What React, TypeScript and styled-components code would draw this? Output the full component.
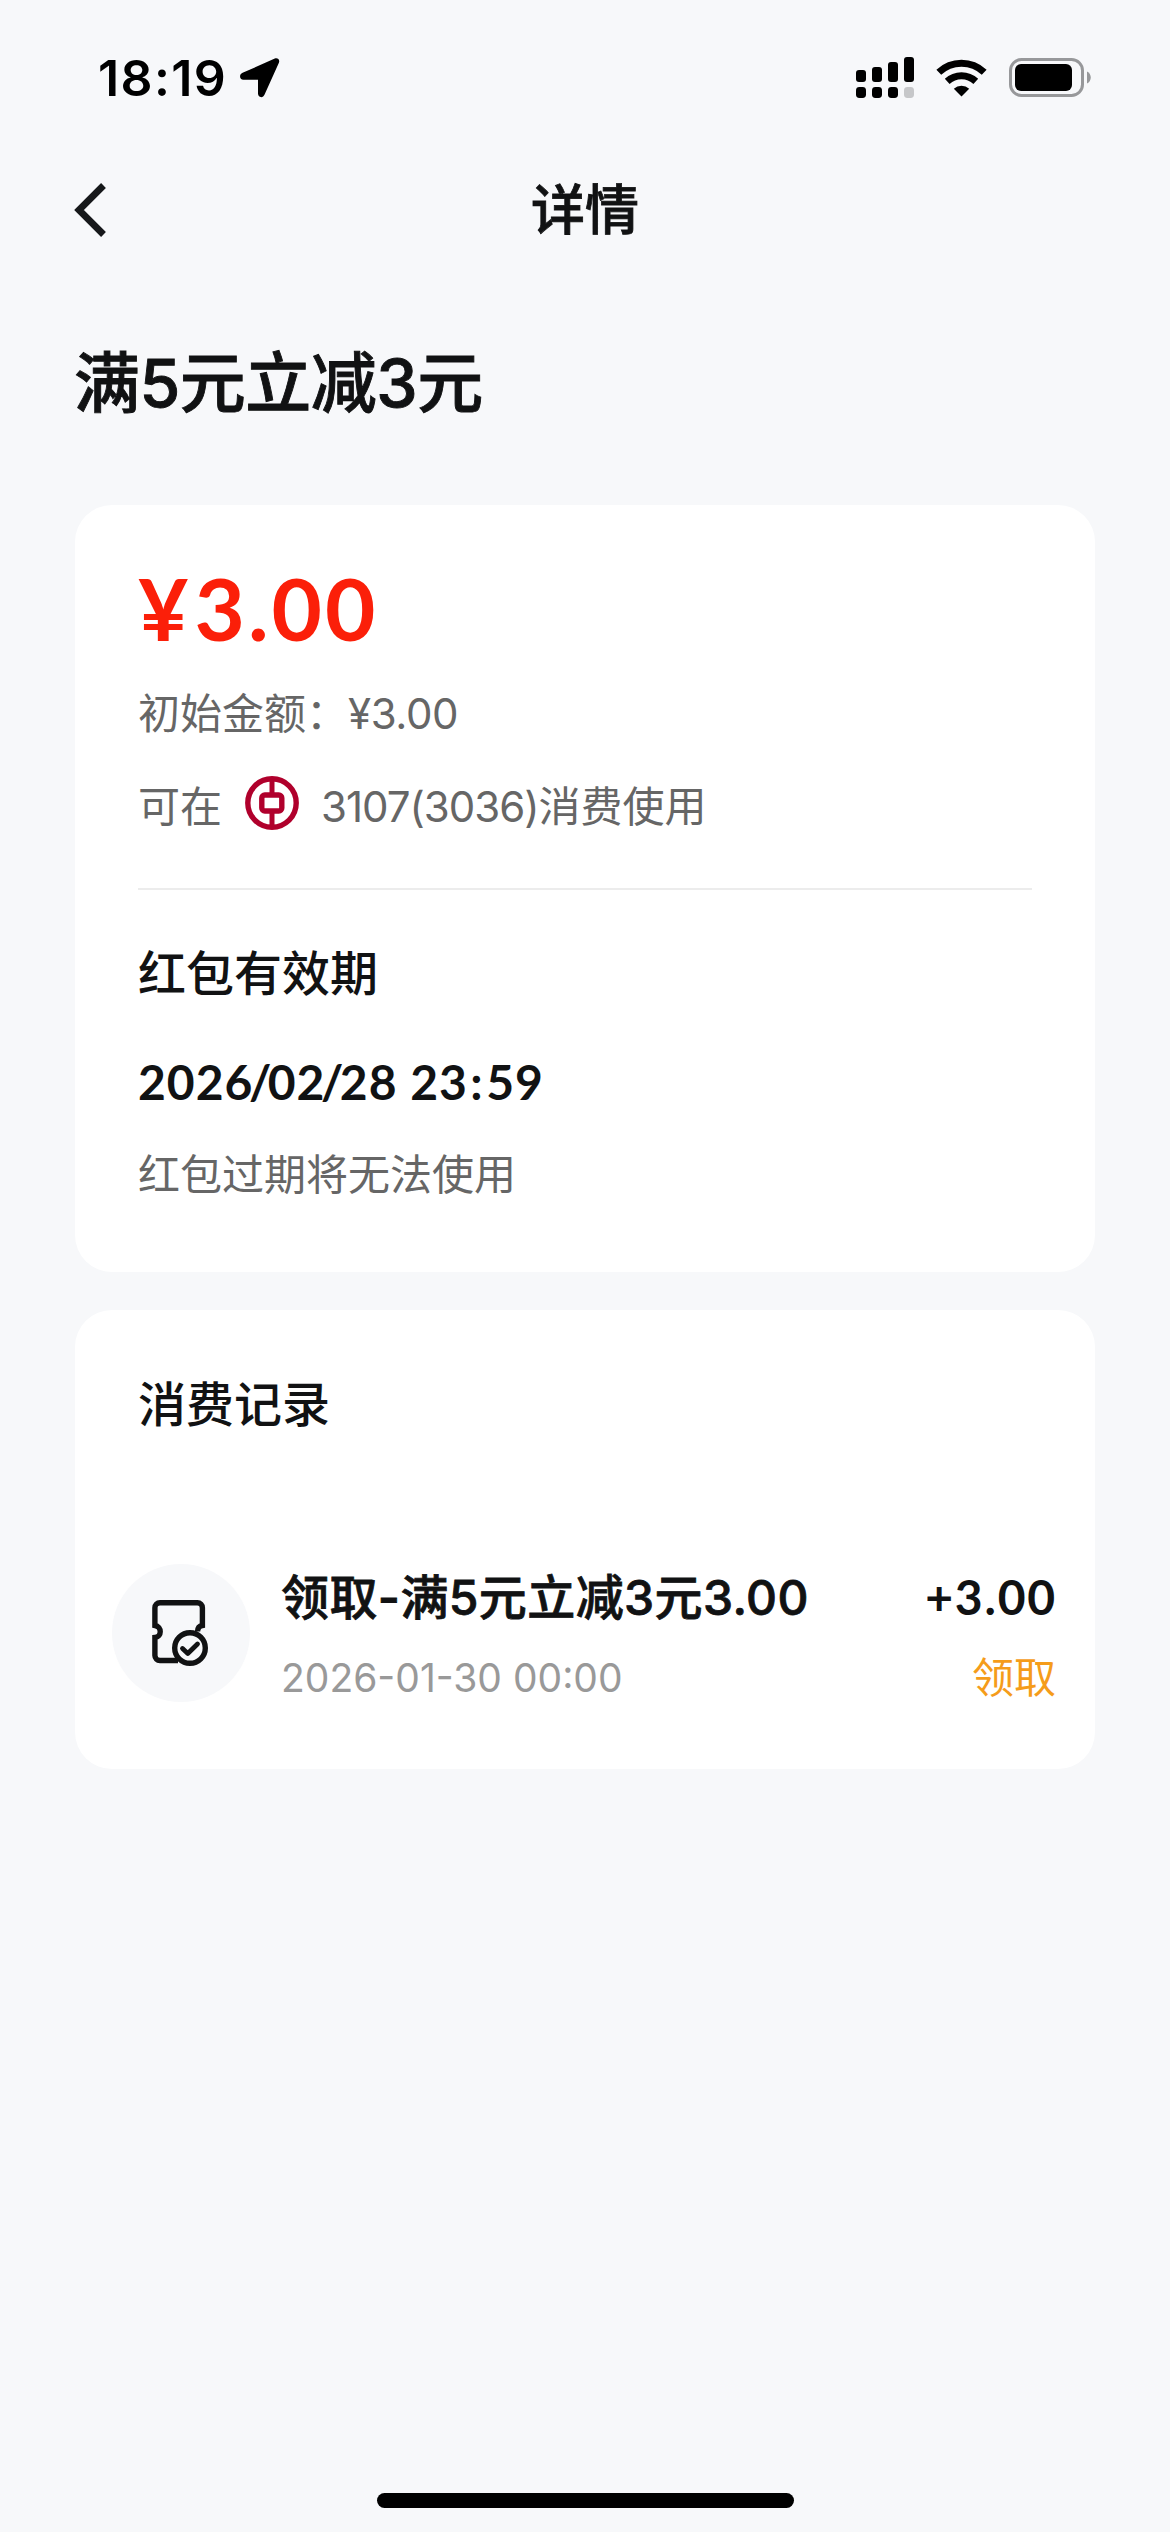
import React from "react";
import styled, { createGlobalStyle } from "styled-components";

const GlobalStyle = createGlobalStyle`
  * { box-sizing: border-box; }
  html, body { margin: 0; padding: 0; background: #f7f8fa; }
`;

const sans = `Inter, "Noto Sans CJK SC", sans-serif`;
const numeric = `Lato, "Noto Sans CJK SC", sans-serif`;

const Screen = styled.div`
  width: 1170px;
  height: 2532px;
  display: flex;
  flex-direction: column;
  background: #f7f8fa;
  color: #111213;
  font-family: ${sans};
  overflow: hidden;
`;

const StatusBar = styled.header`
  height: 156px;
  padding: 0 79px 0 98px;
  display: flex;
  justify-content: space-between;
  align-items: center;
  color: #000;
`;

const StatusGroup = styled.div<{ $gap: number }>`
  display: flex;
  align-items: center;
  gap: ${(p) => p.$gap}px;
`;

const Clock = styled.span`
  font-size: 50px;
  line-height: 60px;
  font-weight: 600;
  letter-spacing: 1.4px;
`;

const NavBar = styled.nav`
  height: 108px;
  padding: 0 74px;
  display: grid;
  grid-template-columns: 60px 1fr 60px;
  align-items: center;
`;

const BackButton = styled.button`
  border: 0;
  padding: 0;
  background: none;
  display: flex;
`;

const NavTitle = styled.h1`
  margin: 1px 0 0;
  text-align: center;
  font-size: 54px;
  line-height: 72px;
  font-weight: 500;
  -webkit-text-stroke: 0.8px currentColor;
`;

const Content = styled.main`
  flex: 1;
  padding: 0 75px;
  display: flex;
  flex-direction: column;
`;

const PageTitle = styled.h2`
  margin: 74px 0 77px -1px;
  font-size: 66px;
  line-height: 90px;
  font-weight: 500;
  letter-spacing: -0.5px;
  -webkit-text-stroke: 0.9px currentColor;
`;

const Card = styled.section<{ $height: number }>`
  height: ${(p) => p.$height}px;
  margin-bottom: 38px;
  border-radius: 37px;
  background: #fff;
  display: flex;
  flex-direction: column;
`;

const CardBody = styled.div`
  padding: 55px 63px 0;
  display: flex;
  flex-direction: column;
`;

const Amount = styled.div`
  font-family: ${numeric};
  font-size: 87px;
  line-height: 96px;
  font-weight: 700;
  letter-spacing: 3px;
  color: #fb1f09;
`;

const Currency = styled.span`
  margin-right: 3px;
`;

const Muted = styled.p<{ $top: number }>`
  margin: ${(p) => p.$top}px 0 0;
  height: 60px;
  display: flex;
  align-items: center;
  font-size: 42px;
  line-height: 60px;
  font-weight: 400;
  color: #666;
  white-space: pre;
`;

const Digits = styled.span<{ $spacing: number }>`
  letter-spacing: ${(p) => p.$spacing}px;
`;

const BankLogo = styled.svg`
  margin: 0 22px 8px 23px;
  flex: none;
`;

const Divider = styled.hr`
  width: 100%;
  height: 2px;
  margin: 51px 0 0;
  border: 0;
  background: #ececec;
`;

const SectionTitle = styled.h3<{ $top: number }>`
  margin: ${(p) => p.$top}px 0 0;
  font-size: 48px;
  line-height: 66px;
  font-weight: 500;
`;

const Expiry = styled.div`
  margin-top: 42px;
  font-family: ${numeric};
  font-size: 48px;
  line-height: 66px;
  font-weight: 700;
  letter-spacing: 1px;
`;

const Separator = styled.span<{ $space: number }>`
  margin: 0 ${(p) => p.$space}px;
`;

const RecordRow = styled.div`
  margin-top: 126px;
  padding: 0 39px 0 37px;
  display: flex;
`;

const RecordIcon = styled.div`
  width: 138px;
  height: 138px;
  margin-right: 31px;
  border-radius: 50%;
  background: #f7f8fa;
  display: flex;
  align-items: center;
  justify-content: center;
`;

const RecordText = styled.div<{ $end?: boolean }>`
  display: flex;
  flex-direction: column;
  gap: 17px;
  padding-top: 1px;
  align-items: ${(p) => (p.$end ? "flex-end" : "flex-start")};
  flex: ${(p) => (p.$end ? "none" : "1")};
`;

const RecordTitle = styled.div`
  font-size: 48px;
  line-height: 66px;
  font-weight: 500;
  letter-spacing: 0.4px;
  -webkit-text-stroke: 0.8px currentColor;
`;

const RecordAmount = styled.div`
  margin: -1px -1px 1px 0;
  font-family: ${numeric};
  font-size: 48px;
  line-height: 66px;
  font-weight: 700;
  letter-spacing: 1.8px;
`;

const RecordTime = styled.div`
  font-size: 39px;
  line-height: 60px;
  font-weight: 400;
  color: #999;
`;

const RecordStatus = styled.div`
  font-size: 42px;
  line-height: 60px;
  font-weight: 400;
  color: #f59c1a;
`;

const HomeIndicator = styled.div`
  width: 417px;
  height: 15px;
  margin: 0 auto 24px;
  border-radius: 8px;
  background: #000;
`;

const LocationArrow = () => (
  <svg width="40" height="40" viewBox="0 0 40 40" fill="#000">
    <path d="M34.8.6C37.7-.5 40.1 1.9 38.9 4.7L24.6 36.6C23.2 40.4 18 39.8 18 35.6V21.8H3.4C-.6 21.8-1.2 16.4 2.6 14.8Z" />
  </svg>
);

const Signal = () => (
  <svg width="58" height="42" viewBox="0 0 58 42">
    <rect x="0" y="13" width="10" height="12" rx="3" />
    <rect x="16" y="10" width="10" height="15" rx="3" />
    <rect x="32" y="5" width="10" height="20" rx="3" />
    <rect x="48" y="0" width="10" height="25" rx="3" />
    <rect x="0" y="30" width="10" height="11" rx="3.4" />
    <rect x="16" y="30" width="10" height="11" rx="3.4" />
    <rect x="32" y="30" width="10" height="11" rx="3.4" />
    <rect x="48" y="30" width="10" height="11" rx="3.4" fill="#c6c7c9" />
  </svg>
);

const Wifi = () => (
  <svg width="51" height="38" viewBox="0 0 51 38" fill="none" stroke="#000">
    <path d="M2.8 13.2a33 33 0 0 1 45.4 0" strokeWidth="7" />
    <path d="M11.2 22.4a21 21 0 0 1 28.6 0" strokeWidth="7" />
    <path d="M17.8 29.8a11.5 11.5 0 0 1 15.4 0L25.5 37.6Z" fill="#000" stroke="none" />
  </svg>
);

const Battery = () => (
  <svg width="82" height="40" viewBox="0 0 82 40">
    <rect x="1.5" y="1.5" width="72" height="36" rx="11" fill="none" stroke="#97989a" strokeWidth="3" />
    <rect x="6" y="6" width="57" height="27" rx="6" />
    <path d="M78 13.5c5 2.2 5 9.8 0 12Z" fill="#97989a" />
  </svg>
);

const BankOfChina = () => (
  <BankLogo width="54" height="54" viewBox="0 0 54 54" fill="none" stroke="#b0002c">
    <circle cx="27" cy="27" r="24.2" strokeWidth="5.4" />
    <path d="M27 2v15M27 37v15" strokeWidth="5" />
    <rect x="16.8" y="19" width="20" height="16" rx="3" strokeWidth="5.4" />
  </BankLogo>
);

const CouponCheck = () => (
  <svg width="60" height="68" viewBox="0 0 60 68" fill="none" stroke="#111213" strokeWidth="5.4">
    <path d="M27 61.500H8.900a5 5 0 0 1-5-5V38.500C11 38 11 27.500 3.900 26.500V8.700a5 5 0 0 1 5-5H46.400a5 5 0 0 1 5 5V26.500C48.500 27 46.600 29 46.600 32.500" />
    <circle cx="39" cy="49" r="15.3" fill="#f7f8fa" />
    <path d="M31.500 49.500l5.300 5L46.500 45" strokeLinecap="round" strokeLinejoin="round" strokeWidth="4.8" />
  </svg>
);

export default function App() {
  return (
    <Screen>
      <GlobalStyle />
      <StatusBar>
        <StatusGroup $gap={13}>
          <Clock>18:19</Clock>
          <LocationArrow />
        </StatusGroup>
        <StatusGroup $gap={22}>
          <Signal />
          <Wifi />
          <Battery />
        </StatusGroup>
      </StatusBar>
      <NavBar>
        <BackButton aria-label="返回">
          <svg width="33" height="54" viewBox="0 0 33 54" fill="none" stroke="#16181a" strokeWidth="6.8">
            <path d="M29.500 2.500L5 27L29.500 51.500" />
          </svg>
        </BackButton>
        <NavTitle>详情</NavTitle>
      </NavBar>
      <Content>
        <PageTitle>满5元立减3元</PageTitle>
        <Card $height={767}>
          <CardBody>
            <Amount>
              <Currency>¥</Currency>3.00
            </Amount>
            <Muted $top={28}>
              初始金额：<Digits $spacing={-0.4}>¥3.00</Digits>
            </Muted>
            <Muted $top={33}>
              可在
              <BankOfChina />
              <Digits $spacing={-1}>3107(3036)</Digits>消费使用
            </Muted>
            <Divider />
            <SectionTitle $top={51}>红包有效期</SectionTitle>
            <Expiry>
              2026<Separator $space={-4.5}>/</Separator>02<Separator $space={-4.5}>/</Separator>28 23
              <Separator $space={2.5}>:</Separator>59
            </Expiry>
            <Muted $top={30}>红包过期将无法使用</Muted>
          </CardBody>
        </Card>
        <Card $height={459}>
          <CardBody>
            <SectionTitle $top={7}>消费记录</SectionTitle>
          </CardBody>
          <RecordRow>
            <RecordIcon>
              <CouponCheck />
            </RecordIcon>
            <RecordText>
              <RecordTitle>领取-满5元立减3元3.00</RecordTitle>
              <RecordTime>2026-01-30 00:00</RecordTime>
            </RecordText>
            <RecordText $end>
              <RecordAmount>+3.00</RecordAmount>
              <RecordStatus>领取</RecordStatus>
            </RecordText>
          </RecordRow>
        </Card>
      </Content>
      <HomeIndicator />
    </Screen>
  );
}
